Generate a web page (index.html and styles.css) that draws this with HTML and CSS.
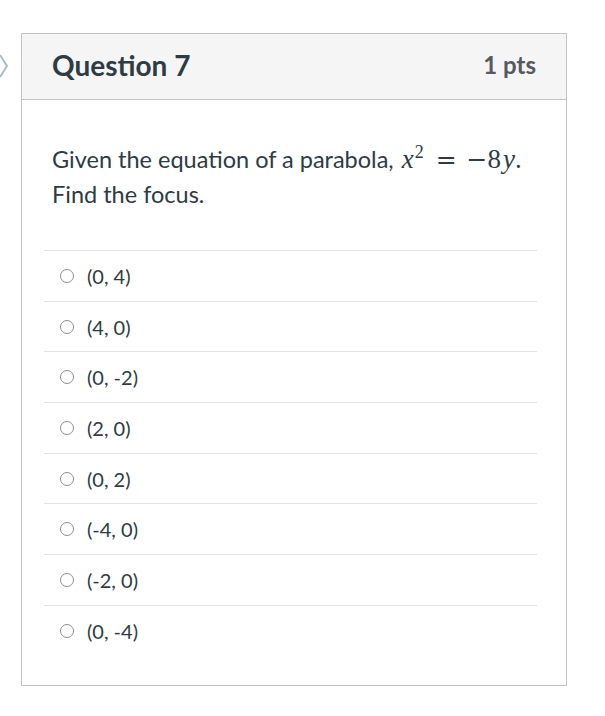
FILE: index.html
```
<!DOCTYPE html>
<html>
<head>
<meta charset="utf-8">
<link rel="stylesheet" href="styles.css">
</head>
<body>
<div class="page">
  <div class="nav">
    <svg class="chev" width="10" height="26" viewBox="0 0 10 26"><path d="M1 2 L8 13 L1 24" fill="none" stroke="#a8bccd" stroke-width="2"/></svg>
  </div>
  <div class="card">
    <div class="head">
      <span class="title">Question 7</span>
      <span class="pts">1 pts</span>
    </div>
    <div class="body">
      <p class="text">Given the equation of a parabola, <span class="math"><i>x</i><sup>2</sup><span class="op eq">=</span><span class="op">−</span>8<i>y</i>.</span><br>Find the focus.</p>
      <div class="answers">
        <div class="ans"><span class="radio"></span><span class="lbl">(0, 4)</span></div>
        <div class="ans"><span class="radio"></span><span class="lbl">(4, 0)</span></div>
        <div class="ans"><span class="radio"></span><span class="lbl">(0, -2)</span></div>
        <div class="ans"><span class="radio"></span><span class="lbl">(2, 0)</span></div>
        <div class="ans"><span class="radio"></span><span class="lbl">(0, 2)</span></div>
        <div class="ans"><span class="radio"></span><span class="lbl">(-4, 0)</span></div>
        <div class="ans"><span class="radio"></span><span class="lbl">(-2, 0)</span></div>
        <div class="ans"><span class="radio"></span><span class="lbl">(0, -4)</span></div>
      </div>
    </div>
  </div>
</div>
</body>
</html>
```
FILE: styles.css
```
html, body { margin: 0; padding: 0; background: #fff; }
body { font-family: Lato, "Noto Sans", sans-serif; color: #2d3b45; }
.page { display: flex; align-items: flex-start; padding-top: 33px; }
.nav { width: 21px; flex: none; padding-top: 20px; }
.chev { display: block; margin-left: -1px; }
.card { width: 544px; border: 1px solid #c3c3c3; flex: none; }
.head { background: #f5f5f5; border-bottom: 1px solid #c3c3c3; display: flex; align-items: center; justify-content: space-between; padding: 0 30px 4px; box-sizing: border-box; height: 66px; }
.title { font-size: 28px; font-weight: 700; color: #2d3b45; }
.pts { font-size: 24px; font-weight: 700; color: #555a5e; }
.body { padding: 42px 29px 29px 22px; }
.text { margin: 0 0 38px 8px; font-size: 23.5px; line-height: 35px; }
.math { font-family: "Liberation Serif", "DejaVu Serif", serif; font-size: 27px; }
.math i { margin-left: 2px; }
.math sup { font-size: 18px; font-style: normal; vertical-align: 10px; line-height: 0; margin-left: 1px; }
.op { font-family: "DejaVu Serif", serif; font-size: 25px; }
.eq { margin: 0 10px 0 12px; }
.answers { border-top: 1px solid #e3e3e3; }
.ans { height: 49.7px; border-bottom: 1px solid #e3e3e3; display: flex; align-items: center; padding-left: 16px; }
.ans:last-child { border-bottom: none; }
.radio { width: 12px; height: 12px; border: 1.5px solid #8f8f8f; border-radius: 50%; flex: none; }
.lbl { font-size: 20px; margin-left: 13px; color: #2d3b45; }
```
